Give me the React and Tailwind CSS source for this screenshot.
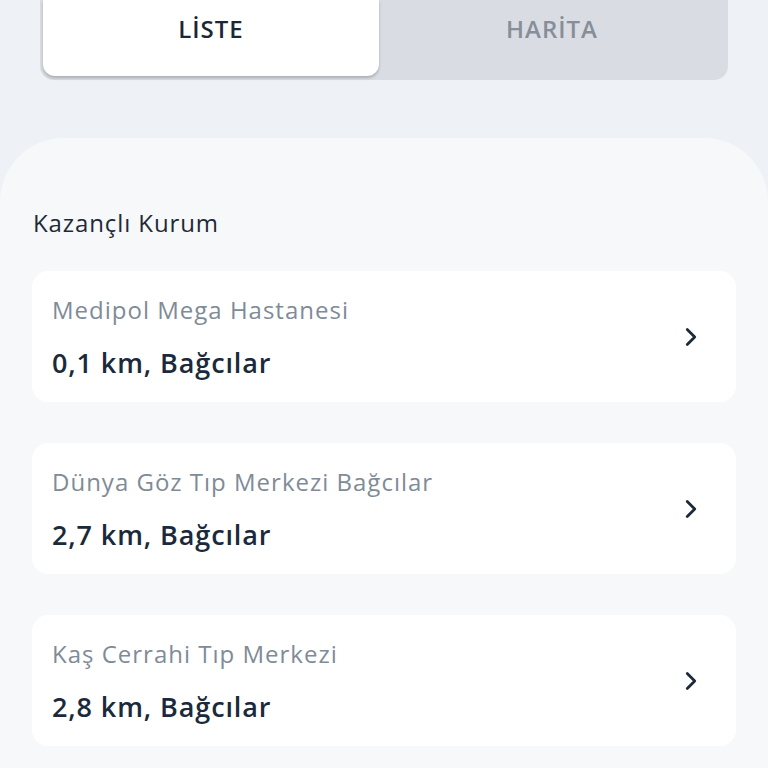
import { ChevronRight } from 'lucide-react';

const items = [
  { name: 'Medipol Mega Hastanesi', dist: '0,1 km, Bağcılar' },
  { name: 'Dünya Göz Tıp Merkezi Bağcılar', dist: '2,7 km, Bağcılar' },
  { name: 'Kaş Cerrahi Tıp Merkezi', dist: '2,8 km, Bağcılar' },
];

export default function App() {
  return (
    <div
      className="w-[768px] h-[768px] overflow-hidden bg-[#eef1f5] flex flex-col"
      style={{ fontFamily: '"Open Sans", "Noto Sans", sans-serif' }}
    >
      {/* Segmented tabs */}
      <div className="mx-[40px] h-[80px] bg-[#d9dde3] rounded-b-[14px] flex p-[3px] pt-0 pb-[4px]">
        <div className="w-[336px] bg-white rounded-b-[12px] shadow-[0_2px_3px_rgba(0,0,0,0.22)] flex justify-center pt-[13px]">
          <span className="text-[24px] font-semibold text-[#1b2735] tracking-[1px] leading-[32px]">LİSTE</span>
        </div>
        <div className="flex-1 flex justify-center pt-[13px]">
          <span className="text-[24px] font-semibold text-[#878e98] tracking-[1px] leading-[32px]">HARİTA</span>
        </div>
      </div>

      {/* Panel */}
      <div className="mt-[58px] flex-1 bg-[#f7f8f9] rounded-t-[64px] px-[32px] pt-[68px]">
        <div className="text-[24px] text-[#1f2a37] leading-[34px] pl-[1px] tracking-[0.9px]">Kazançlı Kurum</div>
        <div className="mt-[31px] flex flex-col gap-[41px]">
          {items.map((it) => (
            <div
              key={it.name}
              className="h-[131px] bg-white rounded-[16px] flex items-center pl-[20px] pr-[30px]"
            >
              <div className="flex-1 flex flex-col">
                <div className="text-[24px] text-[#7f8b97] leading-[34px] tracking-[1px]">{it.name}</div>
                <div className="mt-[19px] text-[27px] font-semibold text-[#1b2a3b] leading-[34px] tracking-[0.9px]">{it.dist}</div>
              </div>
              <ChevronRight className="w-[30px] h-[30px] text-[#1b2a3b]" strokeWidth={2.2} />
            </div>
          ))}
        </div>
      </div>
    </div>
  );
}
